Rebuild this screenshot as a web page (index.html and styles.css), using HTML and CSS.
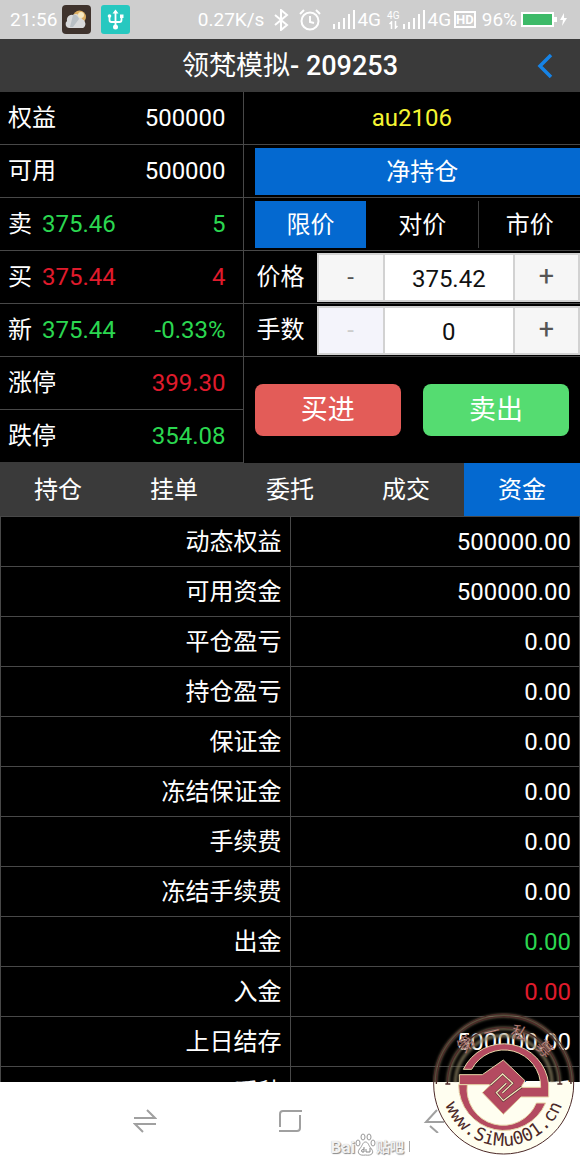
FILE: index.html
```html
<!DOCTYPE html>
<html lang="zh-CN">
<head>
<meta charset="utf-8">
<meta name="viewport" content="width=device-width, initial-scale=1">
<title>领梵模拟- 209253</title>
<link rel="stylesheet" href="styles.css">
</head>
<body>
<div class="app">
  <div class="status">
    <span class="clock">21:56</span>
    <svg class="app-icon" width="29" height="29" viewBox="0 0 29 29" aria-hidden="true">
      <rect width="29" height="29" rx="4" fill="#3f332d"/>
      <circle cx="17.500" cy="12" r="6.500" fill="#dcae62"/>
      <path d="M7 23a4 4 0 0 1-2-7 5 5 0 0 1 6-6 6 6 0 0 1 9 4 5 5 0 0 1 1 9z" fill="#d9dadb"/>
      <path d="M11 10a5 5 0 0 1 6 4l-6 8H8z" fill="#b9c0c5"/>
      <circle cx="19" cy="10" r="3" fill="#f8e9c1"/>
    </svg>
    <svg class="usb-icon" width="29" height="29" viewBox="0 0 29 29" aria-hidden="true">
      <rect width="29" height="29" rx="3" fill="#27c8c0"/>
      <path d="M14.500 6v16M8.500 11v4q0 2 2 2h8q2 0 2-2v-4" fill="none" stroke="#fff" stroke-width="1.800"/>
      <path d="M11.500 8.500l3-4 3 4z" fill="#fff"/><circle cx="14.500" cy="22" r="2.500" fill="#fff"/>
      <circle cx="8.500" cy="11" r="1.800" fill="#fff"/><path d="M19 9.500h3.500V13H19z" fill="#fff"/>
    </svg>
    <span class="speed">0.27K/s</span>
    <svg class="bt" width="15" height="22" viewBox="0 0 15 22" fill="none" stroke="#fff" stroke-width="2" aria-hidden="true"><path d="M1 6l12 10-6 5V1l6 5L1 16"/></svg>
    <svg class="alarm" width="22" height="22" viewBox="0 0 22 22" fill="none" stroke="#fff" stroke-width="2" aria-hidden="true"><circle cx="11" cy="12" r="8.500"/><path d="M11 7v6l4 1M1 5l4-4M21 5l-4-4"/></svg>
    <svg class="signal" width="22" height="20" viewBox="0 0 22 20" stroke="#fff" stroke-width="2" aria-hidden="true"><path d="M1 19v-5M6 19v-7M11 19V8M16 19V4M21 19V0"/></svg>
    <span>4G</span>
    <span class="mini">4G<svg width="9" height="8" viewBox="0 0 9 8" fill="none" stroke="#fff" stroke-width="1.500" aria-hidden="true"><path d="M2.500 8V1L.5 3M6.500 0v7l2-2"/></svg></span>
    <svg class="signal" width="22" height="20" viewBox="0 0 22 20" stroke="#fff" stroke-width="2" aria-hidden="true"><path d="M1 19v-5M6 19v-7M11 19V8M16 19V4M21 19V0"/></svg>
    <span>4G</span>
    <span class="hd">HD</span>
    <span class="percent">96%</span>
    <svg width="47" height="16" viewBox="0 0 47 16" aria-hidden="true"><rect x="1" y="1" width="31" height="13" fill="#3dba68" stroke="#fff" stroke-width="2"/><path d="M33 5h3v5h-3zM43 1l-4 7h3l-1 6 5-8h-3z" fill="#fff"/></svg>
  </div>

  <header class="title-bar">
    <h1>领梵模拟<span>- 209253</span></h1>
    <button class="back" type="button" aria-label="返回"><svg width="16" height="24" viewBox="0 0 16 24" fill="none" stroke="#1683e6" stroke-width="3.500" aria-hidden="true"><path d="M14 1L3 12l11 11"/></svg></button>
  </header>

  <main class="content">
    <section class="trade">
      <div class="quotes">
        <div class="quote"><span>权益</span><b class="end">500000</b></div>
        <div class="quote"><span>可用</span><b class="end">500000</b></div>
        <div class="quote"><span>卖</span><b class="up">375.46</b><b class="end up">5</b></div>
        <div class="quote"><span>买</span><b class="down">375.44</b><b class="end down">4</b></div>
        <div class="quote"><span>新</span><b class="up">375.44</b><b class="end up">-0.33%</b></div>
        <div class="quote"><span>涨停</span><b class="end down">399.30</b></div>
        <div class="quote"><span>跌停</span><b class="end up">354.08</b></div>
      </div>
      <form class="order">
        <div class="line symbol">au2106</div>
        <div class="line inset"><button class="net" type="button">净持仓</button></div>
        <div class="line inset"><div class="price-types">
          <button class="active" type="button">限价</button><button type="button">对价</button><button type="button">市价</button>
        </div></div>
        <div class="line field"><label for="price">价格</label>
          <div class="stepper"><button type="button" aria-label="减少价格">-</button><input id="price" type="text" value="375.42"><button type="button" aria-label="增加价格">+</button></div>
        </div>
        <div class="line field"><label for="lots">手数</label>
          <div class="stepper"><button type="button" disabled aria-label="减少手数">-</button><input id="lots" type="text" value="0"><button type="button" aria-label="增加手数">+</button></div>
        </div>
        <div class="actions"><button class="buy" type="button">买进</button><button class="sell" type="button">卖出</button></div>
      </form>
    </section>

    <nav class="tabs">
      <button type="button">持仓</button><button type="button">挂单</button><button type="button">委托</button><button type="button">成交</button><button class="active" type="button">资金</button>
    </nav>

    <div class="funds">
      <table>
        <tbody>
          <tr><th scope="row">动态权益</th><td>500000.00</td></tr>
          <tr><th scope="row">可用资金</th><td>500000.00</td></tr>
          <tr><th scope="row">平仓盈亏</th><td>0.00</td></tr>
          <tr><th scope="row">持仓盈亏</th><td>0.00</td></tr>
          <tr><th scope="row">保证金</th><td>0.00</td></tr>
          <tr><th scope="row">冻结保证金</th><td>0.00</td></tr>
          <tr><th scope="row">手续费</th><td>0.00</td></tr>
          <tr><th scope="row">冻结手续费</th><td>0.00</td></tr>
          <tr><th scope="row">出金</th><td class="up">0.00</td></tr>
          <tr><th scope="row">入金</th><td class="down">0.00</td></tr>
          <tr><th scope="row">上日结存</th><td>500000.00</td></tr>
          <tr><th scope="row">币种</th><td>人民币</td></tr>
        </tbody>
      </table>
    </div>
  </main>

  <footer class="system-nav">
    <button type="button" aria-label="切换"><svg width="24" height="24" viewBox="0 0 24 24"><path d="M1 9h21L14 1M23 15H2l8 8"/></svg></button>
    <button type="button" aria-label="主页"><svg width="24" height="24" viewBox="0 0 24 24"><path d="M2 18V5q0-3 3-3h19M22 6v13q0 3-3 3H1"/></svg></button>
    <button type="button" aria-label="后退"><svg width="24" height="24" viewBox="0 0 24 24"><path d="M21 13H3L14 1M7 17l8 7"/></svg></button>
    <button type="button" aria-label="菜单"><svg width="24" height="24" viewBox="0 0 24 24"><path d="M8 7h8M8 12h5M8 18h8"/></svg></button>
  </footer>

  <div class="tieba">Bai<svg width="21" height="24" viewBox="0 0 21 24" aria-hidden="true"><g fill="#fff" stroke="#999" stroke-width="1"><ellipse cx="3" cy="10" rx="2" ry="3"/><ellipse cx="8" cy="4" rx="2" ry="3"/><ellipse cx="14" cy="4" rx="2" ry="3"/><ellipse cx="18" cy="10" rx="2" ry="3"/><path d="M10.500 9c3 0 3 4 6 7 3 4 0 7-6 6-6 1-9-2-6-6 3-3 3-7 6-7z"/></g><path d="M9 14v5H7q-2-2 2-3M11 16v3h4v-4" fill="none" stroke="#888"/></svg><span>贴吧</span><i></i></div>

  <svg class="seal" viewBox="36 20 432 432" aria-hidden="true">
    <defs>
      <clipPath id="lower"><rect x="36" y="231" width="432" height="222"/></clipPath>
      <clipPath id="upper"><rect x="36" y="20" width="432" height="211"/></clipPath>
      <filter id="glow" x="-10%" y="-10%" width="120%" height="120%"><feGaussianBlur stdDeviation="4"/></filter>
      <path id="arc-low" d="M65 236a186 186 0 0 0 372 0"/>
    </defs>
    <circle cx="251" cy="236" r="210" fill="#fffef0" clip-path="url(#lower)"/>
    <g clip-path="url(#upper)" fill="none" stroke="#8b8060" stroke-width="8" filter="url(#glow)"><circle cx="251" cy="236" r="205"/><circle cx="251" cy="236" r="167"/><circle cx="251" cy="236" r="145"/></g>
    <circle cx="251" cy="236" r="210" fill="none" stroke="#4c2928" stroke-width="3"/>
    <g fill="none" stroke="#4c2928" stroke-width="4"><path d="M49 236a202 202 0 0 1 404 0M82 236a169 169 0 0 1 338 0"/><path d="M76 236h15M412 236h15"/></g>
    <g fill="#b44a60" stroke="#e6d6a8" stroke-width="3" stroke-linejoin="round">
      <path d="M130 192A135 135 0 0 1 386 236V275H303L250 327 187 262 212 238H118V208H187L250 164 315 226 303 246H362A110 110 0 0 0 155 192Z"/>
      <path d="M116 238A136 136 0 0 0 377 293H349A108 108 0 0 1 142 238Z"/>
    </g>
    <g fill="none" stroke="#4c2930" stroke-width="7"><path d="M211 240L248 206 278 234 247 263M305 245L250 286 229 262 259 234"/></g>
    <g fill="none" stroke="#f3e4b8" stroke-width="4"><path d="M211 240L248 206 278 234 247 263M305 245L250 286 229 262 259 234"/></g>
    <text class="seal-url"><textPath href="#arc-low" startOffset="50%" text-anchor="middle">www.SiMu001.cn</textPath></text>
    <g class="seal-name"><text x="136" y="113" transform="rotate(-42 136 113)">第</text><text x="214" y="77" transform="rotate(-14 214 77)">一</text><text x="299" y="80" transform="rotate(17 299 80)">私</text><text x="376" y="128" transform="rotate(48 376 128)">募</text></g>
  </svg>
</div>
</body>
</html>
```
FILE: styles.css
```css
* { box-sizing: border-box; }
body {
  margin: 0;
  background: #000;
  color: #fff;
  font-family: Roboto, "Noto Sans CJK SC", sans-serif;
  font-size: 24px;
  line-height: 32px;
}
button, input { font: inherit; color: inherit; border: 0; border-radius: 0; margin: 0; padding: 0; background: none; min-width: 0; }
svg { display: block; flex: none; }
.app { position: relative; display: flex; flex-direction: column; height: 100vh; overflow: hidden; }

.status { display: flex; align-items: center; height: 39px; flex: none; padding: 0 12px 0 10px; background: #cecece; font-size: 19px; line-height: 24px; white-space: nowrap; }
.app-icon { margin-left: 5px; }
.usb-icon { margin-left: 10px; }
.speed { margin-left: auto; }
.bt { margin-left: 10px; }
.alarm { margin: 0 12px 0 10px; }
.signal { margin-right: 2px; }
.mini { display: flex; flex-direction: column; align-items: center; margin: 0 4px 0 6px; font-size: 10px; line-height: 11px; }
.hd { margin: 0 6px 0 3px; border: 2px solid #fff; padding: 0; font-size: 13px; line-height: 13px; font-weight: 700; }
.percent { margin-right: 4px; }

.title-bar { display: grid; grid-template-columns: 1fr auto 1fr; align-items: center; height: 53px; flex: none; background: #3a3a3a; }
.title-bar h1 { grid-column: 2; margin: 0; font-size: 27px; line-height: 36px; font-weight: 400; }
.title-bar h1 span { font-weight: 500; }
.back { justify-self: end; padding: 0 27px 0 12px; }

.content { display: flex; flex-direction: column; flex: 1; min-height: 0; }
.trade { display: grid; grid-template-columns: 21fr 29fr; flex: none; }
.quotes { border-right: 1px solid #484848; }
.quote { display: flex; align-items: center; gap: 10px; height: 53px; padding: 0 17px 0 8px; border-bottom: 1px solid #484848; }
.quote b { font-weight: 400; }
.quote .end { margin-left: auto; }
.up { color: #2bd750; }
.down { color: #e01b2c; }
.quote:last-child { border-bottom-color: #3a3a3a; }

.order { display: flex; flex-direction: column; min-width: 0; }
.line { height: 53px; flex: none; border-bottom: 1px solid #484848; }
.symbol { padding-top: 10px; text-align: center; color: #f5f532; }
.inset { padding: 3px 0 2px 11px; }
.net { width: 100%; height: 100%; padding-left: 10px; background: #0469d0; }
.price-types { display: grid; grid-template-columns: 11fr 11fr 10fr; height: 100%; }
.price-types button + button + button { border-left: 1px solid #3c3c3c; }
.price-types .active, .tabs .active { background: #0469d0; }
.field { display: grid; grid-template-columns: 60px 1fr; align-items: center; gap: 0; padding-left: 13px; }
.stepper { display: grid; grid-template-columns: 66px 1fr 65px; height: 49px; background: #fff; border: 2px solid #d2d2d2; color: #111; }
.stepper input { width: 100%; text-align: center; padding-top: 3px; }
.stepper button { background: #f6f6f6; color: #555; }
.stepper button:first-child { border-right: 2px solid #d2d2d2; }
.stepper button:last-child { border-left: 2px solid #d2d2d2; padding-bottom: 2px; font-size: 27px; }
.stepper button:disabled { background: #f4f4fb; color: #ccc; }
.actions { display: grid; grid-template-columns: 1fr 1fr; gap: 22px; align-items: center; flex: 1; padding: 0 11px; }
.actions button { height: 52px; border-radius: 8px; font-size: 27px; }
.buy { background: #e35c58; }
.sell { background: #55dc71; }

.tabs { display: grid; grid-template-columns: repeat(5, 1fr); height: 53px; flex: none; background: #3a3a3a; }
.funds { flex: 1; min-height: 0; overflow: hidden; }
.funds table { width: 100%; table-layout: fixed; border-collapse: collapse; }
.funds th, .funds td { height: 50px; padding: 0 8px; border: 1px solid #484848; text-align: right; font-weight: 400; }

.system-nav { display: grid; grid-template-columns: 1fr 2fr 2fr 2fr 1fr; align-items: center; height: 78px; flex: none; background: #fff; }
.system-nav button { display: grid; place-items: center; }
.system-nav button:first-child { grid-column: 2; }
.system-nav svg { fill: none; stroke: #a0a0a0; stroke-width: 2; }

.tieba { position: absolute; right: 170px; bottom: 3px; display: flex; align-items: flex-end; color: #f2f2f2; font-size: 17px; line-height: 20px; font-weight: 700; text-shadow: 1px 1px 1px #888, 0 0 1px #bbb; }
.tieba span { font-size: 14px; }
.tieba i { width: 1px; height: 11px; margin: 0 0 5px 5px; background: #aaa; }
.seal { position: absolute; right: 4px; bottom: 4px; width: 144px; height: 144px; }
.seal-url { font: 54px "DejaVu Sans Mono", monospace; fill: #4c2928; }
.seal-name text { font: 50px "Noto Sans CJK SC", sans-serif; fill: #c9958c; stroke: #59312f; stroke-width: 1px; text-anchor: middle; dominant-baseline: central; }
```
